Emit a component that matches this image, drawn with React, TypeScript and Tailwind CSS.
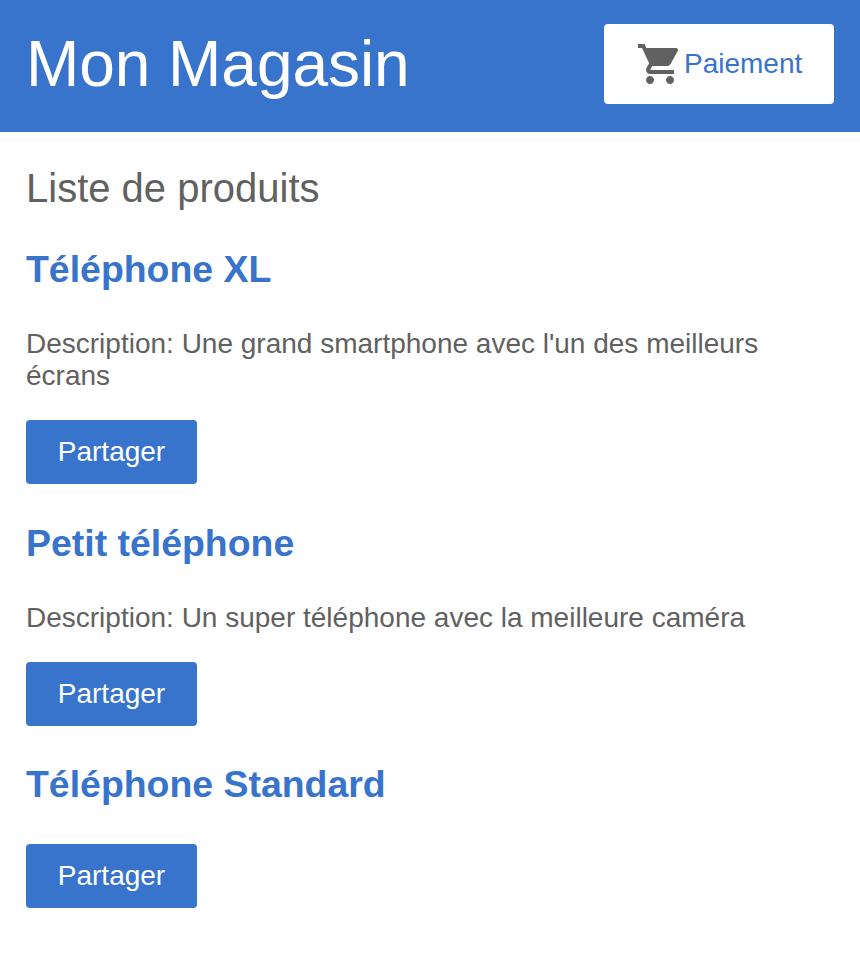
import React from "react";
import { MdShoppingCart } from "react-icons/md";

type Product = { name: string; description?: string };

const products: Product[] = [
  { name: "Téléphone XL", description: "Une grand smartphone avec l'un des meilleurs écrans" },
  { name: "Petit téléphone", description: "Un super téléphone avec la meilleure caméra" },
  { name: "Téléphone Standard" },
];

function ProductItem({ name, description }: Product) {
  return (
    <article>
      <h3 className="mb-[37.44px] text-[37.44px] leading-[43px] font-bold text-[#3874cb]">{name}</h3>
      {description && (
        <p className="mb-7 text-[28px] leading-8">Description: {description}</p>
      )}
      <button className="block h-16 w-[171px] rounded-[4px] bg-[#3874cb] text-[28px] leading-8 text-white">
        Partager
      </button>
    </article>
  );
}

export default function App() {
  return (
    <div className="min-h-[954px] bg-white font-['Liberation_Sans',Arial,sans-serif] text-[#616161] antialiased">
      <header className="flex h-[132px] items-start justify-between bg-[#3874cb] px-[26px] pt-6">
        <h1 className="text-[64px] leading-[80px] tracking-[-0.05px] text-white">Mon Magasin</h1>
        <a className="flex h-20 w-[230px] items-center rounded-[4px] bg-white pl-8 text-[28px] text-[#3874cb]">
          <MdShoppingCart className="size-12 text-[#616161]" />
          Paiement
        </a>
      </header>
      <main className="px-[26px] pt-8">
        <h2 className="mb-[35.7px] text-[40px] leading-[48px]">Liste de produits</h2>
        <div className="flex flex-col gap-[37.44px]">
          {products.map((p) => (
            <ProductItem key={p.name} {...p} />
          ))}
        </div>
      </main>
    </div>
  );
}
